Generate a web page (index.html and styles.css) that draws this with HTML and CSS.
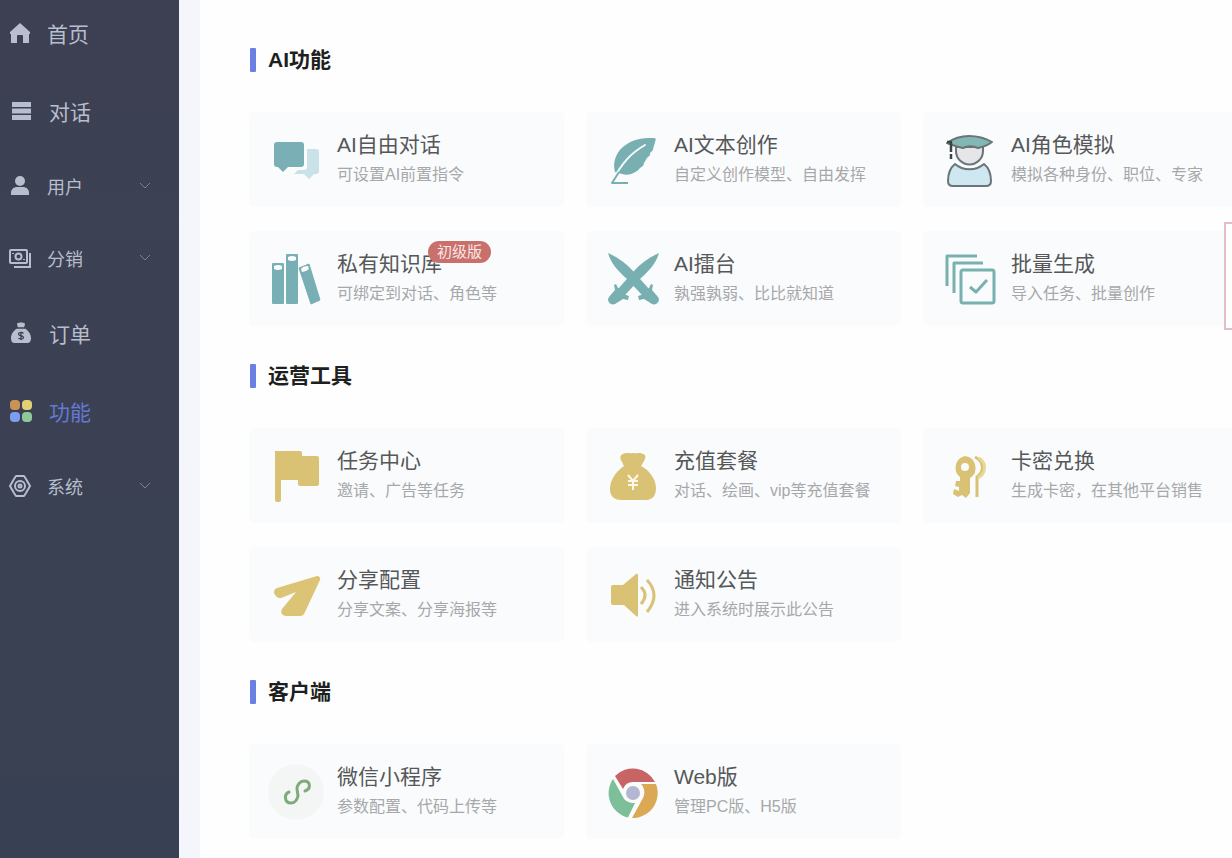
FILE: index.html
```html
<!DOCTYPE html>
<html lang="zh-CN">
<head>
<meta charset="utf-8">
<title>功能</title>
<link rel="stylesheet" href="styles.css">
</head>
<body>
<div class="layout">
  <nav class="sidebar">
    <ul class="menu">
      <li><a class="menu-link" href="#">
        <svg class="menu-icon" viewBox="0 0 22 22"><path fill="currentColor" d="M11 1 1 10v2h1v9h6v-7a1 1 0 0 1 1-1h4a1 1 0 0 1 1 1v7h6v-9h1v-2z"/></svg>
        <span>首页</span></a></li>
      <li><a class="menu-link menu-link-inset" href="#">
        <svg class="menu-icon" viewBox="0 0 22 22"><path fill="currentColor" d="M2 2h19v5H2zM2 8.500h19v5H2zM2 15h19v5H2z"/></svg>
        <span>对话</span></a></li>
      <li><button class="menu-link menu-group" type="button">
        <svg class="menu-icon" viewBox="0 0 22 22"><circle cx="11" cy="6" r="5" fill="currentColor"/><path fill="currentColor" d="M2 20v-2c0-4 3-6 6-6h6c3 0 6 2 6 6v2z"/></svg>
        <span>用户</span>
        <svg class="chevron" viewBox="0 0 12 12"><path d="m1 3 5 5 5-5"/></svg></button></li>
      <li><button class="menu-link menu-group" type="button">
        <svg class="menu-icon" viewBox="0 0 22 22" fill="none" stroke="currentColor" stroke-width="2"><rect x="1" y="3" width="17" height="13" rx="1"/><circle cx="9.500" cy="9.500" r="3"/><path d="M21 6v14H5M4 6v1M15 12v1"/></svg>
        <span>分销</span>
        <svg class="chevron" viewBox="0 0 12 12"><path d="m1 3 5 5 5-5"/></svg></button></li>
      <li><a class="menu-link menu-link-inset" href="#">
        <svg class="menu-icon" viewBox="0 0 22 22"><path fill="currentColor" d="M7 2c0-2 8-2 8 0l-1 4c4 2 7 6 7 10 0 3-1 5-4 5H5c-3 0-4-2-4-5 0-4 3-8 7-10z"/><path d="M7 6h8M13.500 11.500c-1-1.500-5-1.500-5 .5 0 2.500 5 1 5 3.500 0 2-4 2-5 .5M11 10v8" fill="none" stroke="#3c4153" stroke-width="1.300"/></svg>
        <span>订单</span></a></li>
      <li><a class="menu-link menu-link-inset menu-active" href="#" aria-current="page">
        <svg class="menu-icon" viewBox="0 0 22 22"><rect x="0" y="0" width="10" height="10" rx="4" fill="#cb9256"/><rect x="12" y="0" width="10" height="10" rx="4" fill="#e0d274"/><rect x="0" y="12" width="10" height="10" rx="4" fill="#7c9df0"/><rect x="12" y="12" width="10" height="10" rx="4" fill="#8fc99b"/></svg>
        <span>功能</span></a></li>
      <li><button class="menu-link menu-group" type="button">
        <svg class="menu-icon" viewBox="0 0 22 22" fill="none" stroke="currentColor" stroke-width="2" stroke-linejoin="round"><path d="M7 1h8l2 3 4 7-4 7-2 3H7l-2-3-4-7 4-7z"/><circle cx="11" cy="11" r="5"/><circle cx="11" cy="11" r="1.500"/></svg>
        <span>系统</span>
        <svg class="chevron" viewBox="0 0 12 12"><path d="m1 3 5 5 5-5"/></svg></button></li>
    </ul>
  </nav>

  <main class="content">
    <section class="group">
      <h2 class="group-title">AI功能</h2>
      <div class="cards">
        <a class="card" href="#">
          <svg class="card-icon" viewBox="0 0 56 56"><path fill="#c9e2e8" d="M39 17h9a3 3 0 0 1 3 3v19a3 3 0 0 1-3 3h-2l-5 5-5-5H26l4-4h6a3 3 0 0 0 3-3z"/><path fill="#7ab0b5" d="M9 10h24a3 3 0 0 1 3 3v19a3 3 0 0 1-3 3H20l-5 5-5-5H9a3 3 0 0 1-3-3V13a3 3 0 0 1 3-3z"/></svg>
          <div class="card-text"><h3 class="card-title">AI自由对话</h3><p class="card-desc">可设置AI前置指令</p></div>
        </a>
        <a class="card" href="#">
          <svg class="card-icon" viewBox="0 0 56 56"><path fill="#78afb1" d="M10 40C7 29 12 18 22 12 31 6 41 6 49 6c2 0 2 2 1 4-1 4-2 6-2 8l-3 3c1 2-2 4-3 5l-3 5c0 2-2 4-4 5-4 5-11 8-18 6z"/><path d="M40 13C26 21 17 31 8 48" fill="none" stroke="#fafbfc" stroke-width="2" stroke-linecap="round"/><path d="M14 40 7 51h16" fill="none" stroke="#78afb1" stroke-width="2" stroke-linejoin="round"/></svg>
          <div class="card-text"><h3 class="card-title">AI文本创作</h3><p class="card-desc">自定义创作模型、自由发挥</p></div>
        </a>
        <a class="card" href="#">
          <svg class="card-icon" viewBox="0 0 56 56" stroke="#6b7477" stroke-width="2" stroke-linejoin="round"><path fill="#e6e6e8" d="M14 15v4a13 13 0 0 0 27 0v-4z"/><path fill="#83b7b4" d="M5 11C12 6 20 4 27 4c8 0 16 2 23 6-5 4-10 5-14 6-5-2-11-2-15 0-6-1-11-3-16-5z"/><path fill="none" stroke="#3c4446" stroke-width="2.500" d="M5 10h4v10M9 22v5"/><path fill="#cfe7f1" d="M13 32c8 7 21 7 29 0 5 4 7 11 7 17 0 3-2 5-5 5H11c-3 0-5-2-5-5 0-6 2-13 7-17z"/></svg>
          <div class="card-text"><h3 class="card-title">AI角色模拟</h3><p class="card-desc">模拟各种身份、职位、专家</p></div>
        </a>
        <a class="card" href="#">
          <svg class="card-icon" viewBox="0 0 56 56" fill="#78afb5"><rect x="4" y="12" width="12" height="41" rx="1"/><rect x="18" y="3" width="12" height="50" rx="1"/><path d="m31 17 10-4 11 36-9 4z" stroke="#78afb5" stroke-linejoin="round"/><g fill="#fafbfc"><path d="M6 15q4-2 8 0v3q-4 2-8 0zM20 6q4-2 8 0v3q-4 2-8 0zM33 18q2-3 7-3l1 3q-3 3-7 3z"/></g></svg>
          <div class="card-text"><h3 class="card-title">私有知识库<span class="badge">初级版</span></h3><p class="card-desc">可绑定到对话、角色等</p></div>
        </a>
        <a class="card" href="#">
          <svg class="card-icon" viewBox="0 0 56 56"><g id="sword" fill="#78afb0"><path d="M3 2c9 4 18 10 25 18l16 18-7 6-16-17C12 19 6 12 3 2z"/><path d="m46 33 2 1-1 5 6 7c3 4-2 9-6 7l-8-5-5 1-1-4 3-1 8-7z"/></g><use href="#sword" transform="matrix(-1 0 0 1 57 0)"/></svg>
          <div class="card-text"><h3 class="card-title">AI擂台</h3><p class="card-desc">孰强孰弱、比比就知道</p></div>
        </a>
        <a class="card" href="#">
          <svg class="card-icon" viewBox="0 0 56 56" fill="none" stroke="#79b1b0" stroke-width="3" stroke-linejoin="round"><path d="M35 5H5v30M41 12H12v30"/><rect x="19" y="19" width="33" height="33" rx="2"/><path d="m28 36 6 5 11-12"/></svg>
          <div class="card-text"><h3 class="card-title">批量生成</h3><p class="card-desc">导入任务、批量创作</p></div>
        </a>
      </div>
    </section>

    <section class="group">
      <h2 class="group-title">运营工具</h2>
      <div class="cards">
        <a class="card" href="#">
          <svg class="card-icon" viewBox="0 0 56 56"><path fill="#d9c273" d="M7 3h25a2 2 0 0 1 2 2v3h15a2 2 0 0 1 2 2v26a2 2 0 0 1-2 2H32a2 2 0 0 1-2-2v-4H13v20a2 2 0 0 1-2 2H9a2 2 0 0 1-2-2z"/></svg>
          <div class="card-text"><h3 class="card-title">任务中心</h3><p class="card-desc">邀请、广告等任务</p></div>
        </a>
        <a class="card" href="#">
          <svg class="card-icon" viewBox="0 0 56 56"><path fill="#d9c273" d="M18 6c3-2 6 0 10-1 5 1 7-1 10 1 4 1 2 5 1 7l-3 5c8 4 15 13 15 22 0 7-3 12-10 12H16C9 52 5 48 5 41c0-10 7-18 14-23l-3-6c-1-2-1-5 2-6z"/><path d="m23 27 5 6 5-6M28 33v9M23 33h10M23 37h10" fill="none" stroke="#fff8e8" stroke-width="2"/></svg>
          <div class="card-text"><h3 class="card-title">充值套餐</h3><p class="card-desc">对话、绘画、vip等充值套餐</p></div>
        </a>
        <a class="card" href="#">
          <svg class="card-icon" viewBox="0 0 56 56"><path fill="#d9c273" fill-rule="evenodd" d="M23 8a12 12 0 0 1 5 22v15l-4 5-4-3-4 2-5-3 1-5 5 2v-4l-4-1 1-5h4v-4A12 12 0 0 1 23 8zm0 7a4 4 0 1 0 0 8 4 4 0 0 0 0-8z"/><path d="M33 9c10 5 9 15 2 20v20" fill="none" stroke="#d9c273" stroke-width="3"/><path d="M37 10c9 6 6 16-1 20" fill="none" stroke="#e7d994" stroke-width="3"/></svg>
          <div class="card-text"><h3 class="card-title">卡密兑换</h3><p class="card-desc">生成卡密，在其他平台销售</p></div>
        </a>
        <a class="card" href="#">
          <svg class="card-icon" viewBox="0 0 56 56"><path fill="#dcc476" d="M49 9c2 0 4 2 3 4L37 45c-1 3-3 4-5 4H18c-4 0-6-4-4-7l14-17-15 6c-3 1-7-3-7-6 0-2 1-3 3-4z"/></svg>
          <div class="card-text"><h3 class="card-title">分享配置</h3><p class="card-desc">分享文案、分享海报等</p></div>
        </a>
        <a class="card" href="#">
          <svg class="card-icon" viewBox="0 0 56 56"><path fill="#d9c273" d="M8 18h10L31 7q2-1 2 1v40q0 3-2 1L19 38H8q-2 0-2-2V20q0-2 2-2z"/><path d="M36 20q8 8 0 17M42 13q14 15 0 32" fill="none" stroke="#d9c273" stroke-width="3"/></svg>
          <div class="card-text"><h3 class="card-title">通知公告</h3><p class="card-desc">进入系统时展示此公告</p></div>
        </a>
      </div>
    </section>

    <section class="group">
      <h2 class="group-title">客户端</h2>
      <div class="cards">
        <a class="card" href="#">
          <svg class="card-icon" viewBox="0 0 56 56"><circle cx="28" cy="28" r="28" fill="#f4f6f6"/><path d="M21 28c-5 2-5 11 2 11 4 0 6-3 7-7l-1-7c0-4 3-8 7-8 7 0 7 8 1 10" fill="none" stroke="#7fab7b" stroke-width="3" stroke-linecap="round"/></svg>
          <div class="card-text"><h3 class="card-title">微信小程序</h3><p class="card-desc">参数配置、代码上传等</p></div>
        </a>
        <a class="card" href="#">
          <svg class="card-icon" viewBox="0 0 56 56"><path fill="#c96464" d="M10 12A25 25 0 0 1 50 18H28a11 11 0 0 0-10 7z"/><path fill="#7cbf98" d="M8 15 18 33c2 4 6 6 12 6l-7 14.500A25 25 0 0 1 8 15z"/><path fill="#dba955" d="M51 20H36c4 4 4 10 2 14L27 54A25 25 0 0 0 51 20z"/><circle cx="28" cy="29" r="7" fill="#b3b7d1"/></svg>
          <div class="card-text"><h3 class="card-title">Web版</h3><p class="card-desc">管理PC版、H5版</p></div>
        </a>
      </div>
    </section>
    <div class="marker"></div>
  </main>
</div>
</body>
</html>
```
FILE: styles.css
```css
* {
  box-sizing: border-box;
}

body {
  margin: 0;
  background: #fefefe;
  color: #555759;
  font-family: "Liberation Sans", "Noto Sans CJK SC", sans-serif;
}

h2,
h3,
p,
ul {
  margin: 0;
  padding: 0;
}

.layout {
  display: flex;
  min-height: 100vh;
  overflow: hidden;
}

/* Sidebar */
.sidebar {
  flex: 0 0 179px;
  padding-top: 17px;
  background: linear-gradient(#3c4052, #3b4153 50%, #384153);
}

.menu {
  display: flex;
  flex-direction: column;
  gap: 46px;
  list-style: none;
}

.menu-link {
  display: flex;
  align-items: center;
  gap: 16px;
  width: 100%;
  height: 32px;
  padding: 0 28px 0 9px;
  border: 0;
  background: none;
  color: #b8becd;
  font: inherit;
  font-size: 21px;
  text-decoration: none;
  cursor: pointer;
}

.menu-link-inset {
  gap: 17px;
  padding-left: 10px;
}

.menu-group {
  height: 26px;
  font-size: 18px;
}

.menu-active {
  color: #6379d2;
}

.menu-icon {
  flex: none;
  width: 22px;
  height: 22px;
}

.chevron {
  width: 12px;
  height: 12px;
  margin-left: auto;
  fill: none;
  stroke: #7b8295;
  stroke-width: 1;
}

/* Content */
.content {
  position: relative;
  flex: 1;
  min-width: 0;
  display: flex;
  flex-direction: column;
  gap: 38px;
  padding: 48px 0 20px 49px;
  border-left: 21px solid #f5f6fc;
}

.group-title {
  display: flex;
  align-items: center;
  gap: 12px;
  height: 24px;
  margin: 0 0 40px 1px;
  color: #1d1f20;
  font-size: 21px;
  line-height: 24px;
}

.group-title::before {
  content: "";
  width: 6px;
  height: 24px;
  border-radius: 1px;
  background: #6c80e4;
}

.cards {
  display: grid;
  grid-template-columns: repeat(3, 1fr);
  gap: 24px 22px;
  margin-right: -6px;
}

.card {
  display: flex;
  align-items: center;
  gap: 13px;
  min-width: 0;
  min-height: 95px;
  padding: 0 0 0 19px;
  border-radius: 5px;
  background: #fafbfc;
  color: inherit;
  text-decoration: none;
}

.card-icon {
  flex: none;
  width: 56px;
  height: 56px;
}

.card-text {
  white-space: nowrap;
}

.card-title {
  position: relative;
  width: max-content;
  font-size: 21px;
  font-weight: 400;
  line-height: 30px;
}

.card-desc {
  color: #a6a8aa;
  font-size: 16px;
  line-height: 30px;
}

.badge {
  position: absolute;
  top: -8px;
  left: 91px;
  padding: 0 9px;
  border-radius: 11px;
  background: #c9706d;
  color: #fbe6e3;
  font-size: 15px;
  line-height: 22px;
}

/* Edge of the highlight frame that continues past the window */
.marker {
  position: absolute;
  top: 222px;
  right: -40px;
  width: 48px;
  height: 108px;
  border: 2px solid #e6bfc4;
  background: #fdfefe;
}
```
